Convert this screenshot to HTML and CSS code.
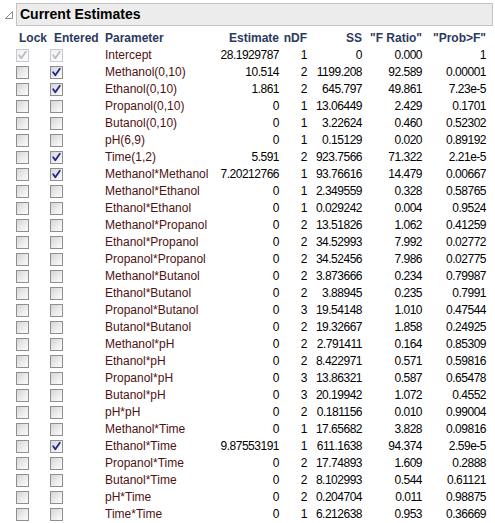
FILE: index.html
```html
<!DOCTYPE html>
<html>
<head>
<meta charset="utf-8">
<link rel="stylesheet" href="styles.css">
</head>
<body>
<div class="report">
  <div class="title-row">
    <svg class="disclosure" width="10" height="10" viewBox="0 0 10 10"><polygon points="1.5,8.5 8.5,8.5 8.5,1.5" fill="none" stroke="#8a8a8a" stroke-width="1"/></svg>
    <div class="title-box">Current Estimates</div>
  </div>
  <table class="est">
    <colgroup>
      <col class="c-lock"><col class="c-ent"><col class="c-par"><col class="c-est"><col class="c-ndf"><col class="c-ss"><col class="c-f"><col class="c-p">
    </colgroup>
    <thead>
      <tr>
        <th class="h-lock">Lock</th><th class="h-ent">Entered</th><th class="h-par">Parameter</th><th class="num">Estimate</th><th class="num">nDF</th><th class="num">SS</th><th class="num">"F Ratio"</th><th class="num">"Prob&gt;F"</th>
      </tr>
    </thead>
    <tbody id="rows"></tbody>
  </table>
</div>
<script src="app.js"></script>
</body>
</html>
```

FILE: app.js
```js
var data = [
  ["Intercept","28.1929787","1","0","0.000","1","dis","dis"],
  ["Methanol(0,10)","10.514","2","1199.208","92.589","0.00001","","on"],
  ["Ethanol(0,10)","1.861","2","645.797","49.861","7.23e-5","","on"],
  ["Propanol(0,10)","0","1","13.06449","2.429","0.1701","",""],
  ["Butanol(0,10)","0","1","3.22624","0.460","0.52302","",""],
  ["pH(6,9)","0","1","0.15129","0.020","0.89192","",""],
  ["Time(1,2)","5.591","2","923.7566","71.322","2.21e-5","","on"],
  ["Methanol*Methanol","7.20212766","1","93.76616","14.479","0.00667","","on"],
  ["Methanol*Ethanol","0","1","2.349559","0.328","0.58765","",""],
  ["Ethanol*Ethanol","0","1","0.029242","0.004","0.9524","",""],
  ["Methanol*Propanol","0","2","13.51826","1.062","0.41259","",""],
  ["Ethanol*Propanol","0","2","34.52993","7.992","0.02772","",""],
  ["Propanol*Propanol","0","2","34.52456","7.986","0.02775","",""],
  ["Methanol*Butanol","0","2","3.873666","0.234","0.79987","",""],
  ["Ethanol*Butanol","0","2","3.88945","0.235","0.7991","",""],
  ["Propanol*Butanol","0","3","19.54148","1.010","0.47544","",""],
  ["Butanol*Butanol","0","2","19.32667","1.858","0.24925","",""],
  ["Methanol*pH","0","2","2.791411","0.164","0.85309","",""],
  ["Ethanol*pH","0","2","8.422971","0.571","0.59816","",""],
  ["Propanol*pH","0","3","13.86321","0.587","0.65478","",""],
  ["Butanol*pH","0","3","20.19942","1.072","0.4552","",""],
  ["pH*pH","0","2","0.181156","0.010","0.99004","",""],
  ["Methanol*Time","0","1","17.65682","3.828","0.09816","",""],
  ["Ethanol*Time","9.87553191","1","611.1638","94.374","2.59e-5","","on"],
  ["Propanol*Time","0","2","17.74893","1.609","0.2888","",""],
  ["Butanol*Time","0","2","8.102993","0.544","0.61121","",""],
  ["pH*Time","0","2","0.204704","0.011","0.98875","",""],
  ["Time*Time","0","1","6.212638","0.953","0.36669","",""]
];
function cb(state) {
  var cls = "cb" + (state === "dis" ? " cb-dis" : "");
  var mark = "";
  if (state === "on" || state === "dis") {
    mark = '<svg class="ck" width="11" height="11" viewBox="0 0 11 11"><polyline points="2.2,5.3 4.3,8.3 8.8,1.8" fill="none" stroke-width="1.8" stroke-linecap="round" stroke-linejoin="round"/></svg>';
  }
  return '<span class="' + cls + '">' + mark + '</span>';
}
var html = "";
data.forEach(function (r) {
  html += "<tr>" +
    '<td class="d-lock">' + cb(r[6]) + "</td>" +
    '<td class="d-ent">' + cb(r[7]) + "</td>" +
    '<td class="par">' + r[0] + "</td>" +
    '<td class="num">' + r[1] + "</td>" +
    '<td class="num">' + r[2] + "</td>" +
    '<td class="num">' + r[3] + "</td>" +
    '<td class="num">' + r[4] + "</td>" +
    '<td class="num">' + r[5] + "</td>" +
    "</tr>";
});
document.getElementById("rows").innerHTML = html;
```

FILE: styles.css
```css
html, body {
  margin: 0;
  padding: 0;
  background: #ffffff;
}
body {
  font-family: "Liberation Sans", Arial, sans-serif;
  font-size: 12px;
  color: #000;
}
.report {
  width: 495px;
  height: 523px;
  overflow: hidden;
}
.title-row {
  display: flex;
  align-items: flex-start;
  margin-top: 3px;
}
.disclosure {
  margin: 7px 2px 0 4px;
  flex: none;
}
.title-box {
  box-sizing: border-box;
  width: 477px;
  height: 23px;
  border: 1px solid #c3c3c3;
  background: #ececec;
  font-weight: bold;
  font-size: 14px;
  line-height: 21px;
  padding-left: 3px;
  color: #000;
}
.est {
  table-layout: fixed;
  border-collapse: collapse;
  margin-top: 4px;
  margin-left: 16px;
  width: 470px;
}
.c-lock { width: 34px; }
.c-ent { width: 55px; }
.c-par { width: 110px; }
.c-est { width: 64px; }
.c-ndf { width: 28px; }
.c-ss { width: 55px; }
.c-f { width: 60px; }
.c-p { width: 64px; }
.est th, .est td {
  padding: 0;
  height: 17px;
  line-height: 17px;
  white-space: nowrap;
  overflow: visible;
  vertical-align: middle;
}
.est th {
  font-weight: bold;
  color: #2b3a5c;
  text-align: left;
}
.est th.h-lock { padding-left: 3px; }
.est th.h-ent { padding-left: 4px; }
.est .num {
  text-align: right;
  letter-spacing: -0.5px;
}
.est th.num { letter-spacing: 0; }
.est td.par {
  color: #4e1212;
}
.est td.num { color: #000; }
.cb {
  box-sizing: border-box;
  display: block;
  width: 13px;
  height: 13px;
  border: 1px solid #8e8f8f;
  background: linear-gradient(135deg, #d4d4d4 0%, #ececec 55%, #fbfbfb 100%);
  position: relative;
}
.cb-dis {
  border-color: #c9c9c9;
  background: linear-gradient(135deg, #f0f0f0 0%, #f7f7f7 60%, #fdfdfd 100%);
}
.ck {
  position: absolute;
  left: 0;
  top: 0;
}
.ck polyline { stroke: #22268a; }
.cb-dis .ck polyline { stroke: #b8bdc9; }
```
